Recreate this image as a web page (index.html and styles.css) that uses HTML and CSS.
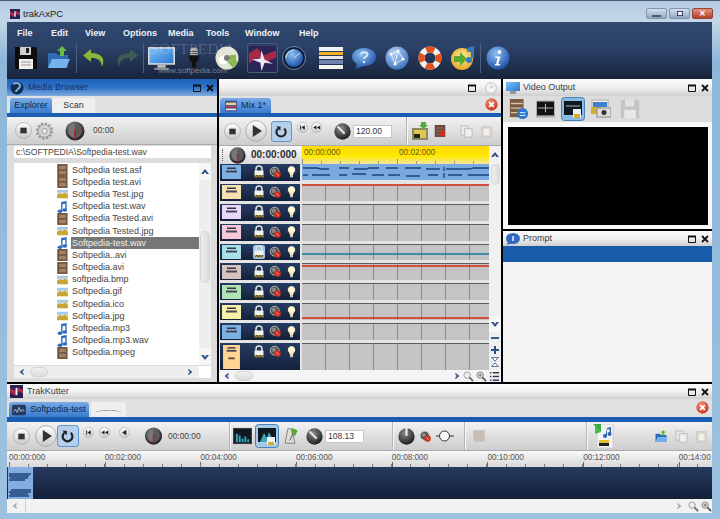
FILE: index.html
```html
<!DOCTYPE html>
<html lang="en">
<head>
<meta charset="utf-8">
<title>trakAxPC</title>
<link rel="stylesheet" href="styles.css">
</head>
<body>
<svg class="defs" aria-hidden="true">
  <defs>
    <linearGradient id="gBtn" x1="0" y1="0" x2="0" y2="1"><stop offset="0" stop-color="#ffffff"/><stop offset="1" stop-color="#c8c8c8"/></linearGradient>
    <linearGradient id="gScreen" x1="0" y1="0" x2="1" y2="1"><stop offset="0" stop-color="#7cc0f4"/><stop offset="1" stop-color="#2c78d4"/></linearGradient>
    <radialGradient id="gBlue" cx=".4" cy=".3" r=".8"><stop offset="0" stop-color="#8cc0f0"/><stop offset="1" stop-color="#1244a0"/></radialGradient>
    <radialGradient id="gBall" cx=".4" cy=".3" r=".8"><stop offset="0" stop-color="#b8d4f4"/><stop offset="1" stop-color="#3068b8"/></radialGradient>
    <radialGradient id="gDark" cx=".4" cy=".3" r=".8"><stop offset="0" stop-color="#8a8a8a"/><stop offset="1" stop-color="#111111"/></radialGradient>
    <radialGradient id="gRed" cx=".4" cy=".3" r=".8"><stop offset="0" stop-color="#f09070"/><stop offset="1" stop-color="#c82818"/></radialGradient>
    <radialGradient id="gGold" cx=".5" cy=".4" r=".7"><stop offset="0" stop-color="#fff0a0"/><stop offset="1" stop-color="#e09a10"/></radialGradient>
    <radialGradient id="gBulb" cx=".5" cy=".35" r=".7"><stop offset="0" stop-color="#ffffff"/><stop offset="1" stop-color="#f4e090"/></radialGradient>
  </defs>
  <symbol id="save" viewBox="0 0 24 24"><path d="M1 1h20l2 2v20H1z" fill="#0c0c0c"/><rect x="6" y="1" width="11" height="8" fill="#cfcfcf"/><rect x="12" y="2" width="3" height="5" fill="#222"/><rect x="5" y="13" width="14" height="10" fill="#f0f0f0"/><path d="M7 16h10M7 19h10" stroke="#999"/></symbol>
  <symbol id="save-off" viewBox="0 0 24 24"><path d="M1 1h20l2 2v20H1z" fill="#c4c4c4"/><rect x="6" y="1" width="11" height="8" fill="#e2e2e2"/><rect x="5" y="13" width="14" height="10" fill="#e8e8e8"/></symbol>
  <symbol id="open" viewBox="0 0 24 24"><path d="M1 7h8l2 2h10v13H1z" fill="#2f6cb5"/><path d="M1 22l4-9h18l-4 9z" fill="#74b2ee"/><path d="M15 0l5 5h-3v5h-4V5h-3z" fill="#66bc3e"/></symbol>
  <symbol id="undo" viewBox="0 0 24 24"><path d="M9 3L1 9.500l8 6.500v-4c6 0 10 1 11 9 4-9-1-14-11-14z" fill="#86b63c"/></symbol>
  <symbol id="redo" viewBox="0 0 24 24"><path d="M15 3l8 6.500-8 6.500v-4c-6 0-10 1-11 9-4-9 1-14 11-14z" fill="#3d5c55"/></symbol>
  <symbol id="monitor" viewBox="0 0 26 24"><rect x="0" y="1" width="26" height="17" fill="#d8d8d8"/><rect x="1.500" y="2.500" width="23" height="14" fill="url(#gScreen)"/><rect x="9" y="18" width="8" height="3" fill="#bbb"/><rect x="6" y="21" width="14" height="2" fill="#888"/></symbol>
  <symbol id="mic" viewBox="0 0 14 24"><rect x="3" y="1" width="8" height="12" rx="4" fill="#aaa"/><path d="M3 5h8M3 7h8M3 9h8" stroke="#555"/><path d="M2 9c0 10 10 10 10 0" fill="#111" stroke="#222"/><rect x="5" y="16" width="4" height="6" fill="#111"/><rect x="2" y="21" width="10" height="2" fill="#333"/></symbol>
  <symbol id="cd" viewBox="0 0 24 24"><circle cx="12" cy="12" r="11.500" fill="#e4e4d4"/><circle cx="8" cy="14" r="4.500" fill="#fff"/><circle cx="12" cy="12" r="3" fill="#777"/><path d="M15 9h6v6h3l-6 7-6-7h3z" fill="#88b84c"/></symbol>
  <symbol id="art" viewBox="0 0 26 24"><rect width="26" height="24" fill="#2c2458"/><path d="M0 7l8-5 6 7 12-5v7l-12 6-6-6-8 6z" fill="#a82848"/><path d="M12 4l3 9 8 4-8-1-3 8-1-8-8-3 8-1z" fill="#e8e8f0"/></symbol>
  <symbol id="globe" viewBox="0 0 24 24"><circle cx="12" cy="12" r="11.500" fill="#0d1c30" stroke="#6a8aa8"/><circle cx="12" cy="12" r="9" fill="url(#gBlue)"/><path d="M4 12a8 8 0 0 1 8-8M12 12l6-5" stroke="#cfe4f8" fill="none"/></symbol>
  <symbol id="list" viewBox="0 0 24 24"><rect x="0" y="1" width="24" height="4" fill="#f4f4f4"/><rect x="0" y="6" width="24" height="3" fill="#f0b020"/><rect x="0" y="10" width="24" height="3" fill="#e8e8e8"/><rect x="0" y="14" width="24" height="4" fill="#7080b0"/><rect x="0" y="19" width="24" height="4" fill="#f4f4f4"/></symbol>
  <symbol id="help" viewBox="0 0 24 24"><path d="M12 2c7 0 12 3.500 12 9s-5 9-12 9l-9 3 2-5c-3-2-5-4-5-7 0-5.500 5-9 12-9z" fill="url(#gBlue)"/><path d="M9 8.500c.5-3 6.500-3 6.500 0 0 2.500-3.500 2-3.500 4.500" fill="none" stroke="#dbe8fa" stroke-width="2"/><circle cx="12" cy="16" r="1.300" fill="#dbe8fa"/></symbol>
  <symbol id="net" viewBox="0 0 24 24"><circle cx="12" cy="12" r="11.500" fill="url(#gBall)"/><path d="M6 8l7-3 5 8-8 5zM13 5l-3 13" stroke="#e4f0fc" fill="none"/><circle cx="6" cy="8" r="1.500" fill="#fff"/><circle cx="13" cy="5" r="1.500" fill="#fff"/><circle cx="18" cy="13" r="1.500" fill="#fff"/><circle cx="10" cy="18" r="1.500" fill="#fff"/></symbol>
  <symbol id="ring" viewBox="0 0 24 24"><circle cx="12" cy="12" r="8.500" fill="none" stroke="#f0f0f0" stroke-width="6"/><circle cx="12" cy="12" r="8.500" fill="none" stroke="#e2501c" stroke-width="6" stroke-dasharray="8 5.350" stroke-dashoffset="4"/></symbol>
  <symbol id="gold" viewBox="0 0 24 24"><circle cx="11" cy="13" r="11" fill="url(#gGold)"/><path d="M3 11h6V7l7 7-7 7v-4H3z" fill="#5ca82c" transform="translate(0 -1)"/><path d="M16 2l7-2v12h-3V5l-4 1z" fill="#3878c0"/><circle cx="18" cy="14" r="3" fill="#3878c0"/></symbol>
  <symbol id="info" viewBox="0 0 24 24"><circle cx="12" cy="12" r="11.500" fill="url(#gBlue)"/><circle cx="13.500" cy="6" r="1.900" fill="#fff"/><path d="M9.500 10.500h5L12.300 18h2l-.4 1.500H8.700l.4-1.500h1l1.600-6H9z" fill="#fff"/></symbol>
  <symbol id="stop" viewBox="0 0 24 24"><circle cx="12" cy="12" r="11.300" fill="url(#gBtn)" stroke="#aaa"/><rect x="7.500" y="8" width="9" height="8" fill="#333"/></symbol>
  <symbol id="play" viewBox="0 0 24 24"><circle cx="12" cy="12" r="11.300" fill="url(#gBtn)" stroke="#aaa"/><path d="M8.500 5.500v13l10-6.500z" fill="#333"/></symbol>
  <symbol id="loop" viewBox="0 0 24 24"><rect x=".5" y=".5" width="23" height="23" rx="3" fill="#b4d0ec" stroke="#5088c0"/><path d="M8 8.500a5.300 5.300 0 1 0 7 0" fill="none" stroke="#222" stroke-width="2.400"/><path d="M6 6l5 .5-.5 5z" fill="#222"/></symbol>
  <symbol id="prev" viewBox="0 0 12 12"><circle cx="6" cy="6" r="5.600" fill="url(#gBtn)" stroke="#bbb"/><path d="M3.500 3.500h1v5h-1zM8.500 3.500v5L5 6z" fill="#222"/></symbol>
  <symbol id="rew" viewBox="0 0 12 12"><circle cx="6" cy="6" r="5.600" fill="url(#gBtn)" stroke="#bbb"/><path d="M6 3.800v4.400L2.500 6zM10 3.800v4.400L6.500 6z" fill="#222"/></symbol>
  <symbol id="back" viewBox="0 0 12 12"><circle cx="6" cy="6" r="5.600" fill="url(#gBtn)" stroke="#bbb"/><path d="M8 3v6L3.500 6z" fill="#222"/></symbol>
  <symbol id="gauge" viewBox="0 0 24 24"><circle cx="12" cy="12" r="11.500" fill="url(#gDark)"/><circle cx="12" cy="12" r="8" fill="#777"/><path d="M12 4a8 8 0 0 1 0 16" fill="#5a5a5a"/><rect x="11" y="10" width="2" height="12" fill="#b02020"/></symbol>
  <symbol id="tempo" viewBox="0 0 24 24"><circle cx="12" cy="12" r="11.500" fill="url(#gDark)"/><path d="M5 5l10 10" stroke="#e0e0e0" stroke-width="3"/></symbol>
  <symbol id="power" viewBox="0 0 24 24"><circle cx="12" cy="12" r="11.500" fill="url(#gDark)"/><rect x="10.500" y="0" width="3" height="11" fill="#eee"/></symbol>
  <symbol id="gear" viewBox="0 0 24 24"><circle cx="12" cy="12" r="8.500" fill="#d4d4d4" stroke="#888"/><circle cx="12" cy="12" r="10" fill="none" stroke="#999" stroke-width="3" stroke-dasharray="3 2.240"/><circle cx="12" cy="12" r="3.500" fill="#eee" stroke="#888"/></symbol>
  <symbol id="lock" viewBox="0 0 16 18"><path d="M4 8V5a4 4 0 0 1 8 0v3" fill="none" stroke="#e0e0e0" stroke-width="2"/><rect x="2" y="7" width="12" height="6" fill="#f0f0f0"/><rect x="2" y="13" width="12" height="3" fill="#d0b030"/><path d="M3 16l2-3 2 3 2-3 2 3 2-3" stroke="#222" fill="none"/></symbol>
  <symbol id="mute" viewBox="0 0 16 16"><circle cx="7" cy="7" r="5.500" fill="#555" stroke="#ccc"/><circle cx="6" cy="6" r="2.500" fill="#888"/><circle cx="10.500" cy="10.500" r="4" fill="#d03020"/><path d="M9 9l3 3" stroke="#f4c0b0"/></symbol>
  <symbol id="bulb" viewBox="0 0 12 18"><path d="M6 1a5 5 0 0 1 3 9l-1 3H4l-1-3a5 5 0 0 1 3-9z" fill="url(#gBulb)"/><rect x="4" y="13" width="4" height="3" fill="#c8c8c8"/></symbol>
  <symbol id="thumb" viewBox="0 0 19 14"><rect width="19" height="14"/><rect x="5" y="2.500" width="9" height="1.500" fill="#334"/><rect x="4" y="5.500" width="11" height="2" fill="#445"/></symbol>
  <symbol id="thumb-tall" viewBox="0 0 19 27"><rect width="19" height="27"/><rect x="5" y="2.500" width="9" height="1.500" fill="#334"/><rect x="4" y="5.500" width="11" height="2" fill="#445"/><rect x="6" y="14" width="7" height="2" fill="#543"/></symbol>
  <symbol id="close" viewBox="0 0 14 14"><circle cx="7" cy="7" r="6.600" fill="url(#gRed)"/><path d="M4.500 4.500l5 5M9.500 4.500l-5 5" stroke="#fff" stroke-width="2"/></symbol>
  <symbol id="max" viewBox="0 0 8 8"><path d="M.5 1.500h7v6h-7z" fill="none" stroke="#111"/><path d="M0 1.500h8" stroke="#111" stroke-width="2"/></symbol>
  <symbol id="x" viewBox="0 0 8 8"><path d="M1 1l6 6M7 1L1 7" stroke="#111" stroke-width="1.800"/></symbol>
  <symbol id="clock" viewBox="0 0 14 14"><circle cx="7" cy="7" r="6.300" fill="#f4f4f4" stroke="#bbb"/><path d="M7 3v4l3-2" fill="none" stroke="#bbb"/></symbol>
  <symbol id="up" viewBox="0 0 10 10"><path d="M5 2l4 5H6.500L5 5 3.500 7H1z" fill="#2c5080"/></symbol>
  <symbol id="down" viewBox="0 0 10 10"><path d="M5 8L1 3h2.500L5 5l1.500-2H9z" fill="#2c5080"/></symbol>
  <symbol id="left" viewBox="0 0 10 10"><path d="M2 5l5-4v2.500L5 5l2 1.500V9z" fill="#2c5080"/></symbol>
  <symbol id="right" viewBox="0 0 10 10"><path d="M8 5L3 1v2.500L5 5 3 6.500V9z" fill="#2c5080"/></symbol>
  <symbol id="minus" viewBox="0 0 10 10"><rect x="1" y="4" width="8" height="2" fill="#3a5a88"/></symbol>
  <symbol id="plus" viewBox="0 0 10 10"><path d="M4 1h2v3h3v2H6v3H4V6H1V4h3z" fill="#2c5080"/></symbol>
  <symbol id="tris" viewBox="0 0 10 12"><path d="M1 .5h8L5 5zM5 7l4 4.500H1z" fill="#fff" stroke="#2c5080"/></symbol>
  <symbol id="lines" viewBox="0 0 12 12"><path d="M1 2h1.500M4 2h7M1 6h1.500M4 6h7M1 10h1.500M4 10h7" stroke="#2c3e5c" stroke-width="1.600"/></symbol>
  <symbol id="zoom-out" viewBox="0 0 12 12"><circle cx="4.500" cy="4.500" r="3.500" fill="#eee" stroke="#999"/><path d="M7 7l4 4" stroke="#666" stroke-width="1.800"/></symbol>
  <symbol id="zoom-in" viewBox="0 0 12 12"><circle cx="4.500" cy="4.500" r="3.500" fill="#d8d8d8" stroke="#888"/><path d="M7 7l4 4" stroke="#555" stroke-width="1.800"/><path d="M4.500 3v3M3 4.500h3" stroke="#666"/></symbol>
  <symbol id="film" viewBox="0 0 11 13"><rect width="11" height="13" fill="#7a5a40"/><rect x="2" y="2" width="7" height="3.500" fill="#a08468"/><rect x="2" y="7.500" width="7" height="3.500" fill="#a08468"/><path d="M.5 1v11" stroke="#3a2a20" stroke-dasharray="1 1"/></symbol>
  <symbol id="image" viewBox="0 0 12 12"><rect y="1.500" width="12" height="9" fill="#e8e8f0"/><path d="M0 7l3-2 3 1 3-2 3 3v3.500H0z" fill="#c8a830"/><rect y="1.500" width="12" height="3" fill="#a8c8e8"/></symbol>
  <symbol id="note" viewBox="0 0 11 13"><path d="M4 1l6-1v9.500h-1.500V3L5.500 3.500v8H4z" fill="#2c6cc0"/><ellipse cx="2.800" cy="11" rx="2.600" ry="1.900" fill="#2c6cc0"/><ellipse cx="8" cy="9.800" rx="2.600" ry="1.900" fill="#2c6cc0"/></symbol>
  <symbol id="mixtab" viewBox="0 0 14 12"><rect width="14" height="12" rx="1" fill="#404880"/><rect x="1" y="2" width="12" height="3" fill="#e8d0a0"/><rect x="1" y="6" width="12" height="2" fill="#b04050"/><rect x="1" y="9" width="12" height="2" fill="#e8e8f4"/></symbol>
  <symbol id="cuttab" viewBox="0 0 16 12"><rect width="16" height="12" rx="2" fill="#2a3a5c"/><path d="M2 8l2-3 2 4 2-6 2 5 2-3 2 3" fill="none" stroke="#a0c0e0"/></symbol>
  <symbol id="kutter" viewBox="0 0 14 14"><rect width="14" height="14" fill="#2a2050"/><path d="M0 3l5 3 4-3 5 2v4L9 7 5 11 0 8z" fill="#b02848"/><path d="M6 3h2v8H6z" fill="#e8e8f4"/></symbol>
  <symbol id="mediatitle" viewBox="0 0 14 14"><circle cx="7" cy="7" r="6.500" fill="#0f3050"/><path d="M3 3c3-2 7-1 7 2s-4 3-4 6" fill="none" stroke="#80b0d8" stroke-width="2"/></symbol>
  <symbol id="mon-small" viewBox="0 0 14 12"><rect width="14" height="9" fill="url(#gScreen)"/><rect x="4" y="9" width="6" height="3" fill="#999"/></symbol>
  <symbol id="bubble-small" viewBox="0 0 14 12"><ellipse cx="7" cy="5.500" rx="7" ry="5.500" fill="#3468c0"/><path d="M2 8l-1 4 5-2z" fill="#3468c0"/><path d="M6 3h2v5H6z" fill="#bcd4f4"/></symbol>
  <symbol id="shelf" viewBox="0 0 20 22"><rect width="15" height="20" fill="#7a5a40"/><path d="M1 5h13M1 10h13M1 15h13" stroke="#d8c0a0" stroke-width="1.500"/><circle cx="14" cy="16" r="6" fill="#2c78d0"/><path d="M11 15h6M11 18h6" stroke="#fff"/></symbol>
  <symbol id="scope" viewBox="0 0 18 16"><rect width="18" height="16" fill="#aaa"/><rect x="1" y="1" width="16" height="13" fill="#111"/><path d="M2 7h14M9 3v8" stroke="#a0b8c8"/></symbol>
  <symbol id="photos" viewBox="0 0 20 18"><rect x="1" y="0" width="16" height="11" fill="#f0f0f0" stroke="#aaa"/><rect x="2" y="2" width="14" height="5" fill="#4080d0"/><rect x="0" y="7" width="10" height="7" fill="#d0b030"/><rect x="6" y="8" width="14" height="9" fill="#ddd" stroke="#888"/><circle cx="13" cy="12.500" r="2.500" fill="#333"/></symbol>
  <symbol id="add" viewBox="0 0 16 18"><rect y="6" width="16" height="12" fill="#8a8a60"/><rect x="2" y="8" width="12" height="8" fill="#e0c850"/><rect x="2" y="12" width="6" height="4" fill="#222"/><path d="M9 0h5v3h2l-4.500 4L7 3h2z" fill="#4cab3c"/></symbol>
  <symbol id="film-red" viewBox="0 0 14 16"><rect width="14" height="16" fill="#6a4a3a"/><path d="M2 4h10M2 8h10M2 12h10" stroke="#a08070"/><circle cx="10" cy="11" r="4" fill="#c83020"/></symbol>
  <symbol id="doc-off" viewBox="0 0 14 14"><rect x="1" y="1" width="8" height="10" fill="#e8e8e8" stroke="#bbb"/><rect x="5" y="4" width="8" height="9" fill="#f0f0f0" stroke="#bbb"/></symbol>
  <symbol id="clip-off" viewBox="0 0 12 14"><rect x="1" y="2" width="10" height="11" fill="#e0d8c8" stroke="#c4c4c4"/><rect x="3" y="4" width="6" height="7" fill="#f0f0f0"/></symbol>
  <symbol id="square-off" viewBox="0 0 12 12"><rect width="12" height="12" fill="#cdbcb0" stroke="#d8d0c8"/></symbol>
  <symbol id="spectrum" viewBox="0 0 20 17"><rect width="20" height="17" fill="#444"/><rect x="1" y="1" width="18" height="15" fill="#101820"/><path d="M3 15v-9h2v9zM6 15v-7h2v7zM9 15v-4h2v4zM12 15v-6h2v6zM15 15v-3h2v3z" fill="#38a8b8"/></symbol>
  <symbol id="spectrum-on" viewBox="0 0 24 24"><rect x=".5" y=".5" width="23" height="23" rx="3" fill="#a8c8e8" stroke="#4880b8"/><rect x="3" y="4" width="18" height="14" fill="#101820"/><path d="M5 18l4-9 3 5 2-6 5 10z" fill="#38a8b8"/><rect x="12" y="13" width="8" height="8" fill="#f0f0f0"/><rect x="13" y="18" width="6" height="3" fill="#d0b030"/></symbol>
  <symbol id="tv-on" viewBox="0 0 24 24"><rect x=".5" y=".5" width="23" height="23" rx="3" fill="#8cb8e4" stroke="#4880b8"/><rect x="3" y="4" width="18" height="14" fill="#101820"/><path d="M5 9h14" stroke="#a0b8c8"/><rect x="12" y="12" width="8" height="9" fill="#f0f0f0"/><rect x="13" y="17" width="6" height="4" fill="#d0b030"/></symbol>
  <symbol id="metro" viewBox="0 0 18 20"><path d="M6 2h4l4 16H3z" fill="#e0e0d8" stroke="#777"/><path d="M8 15L14 3" stroke="#444"/><path d="M11 1l6 3-3 6-4-3z" fill="#58a838"/></symbol>
  <symbol id="circle-line" viewBox="0 0 18 12"><path d="M0 6h3M14 6h4" stroke="#333"/><circle cx="8.500" cy="6" r="5" fill="#f8f8f8" stroke="#333"/></symbol>
  <symbol id="music-doc" viewBox="0 0 22 24"><rect x="4" y="0" width="16" height="24" fill="#f4f4f4" stroke="#ccc"/><path d="M14 4l4-1v7h-1.500V5l-2.500.600v6h-1.500z" fill="#2c60b0"/><circle cx="12" cy="12" r="2" fill="#2c60b0"/><circle cx="16.500" cy="10" r="2" fill="#2c60b0"/><rect x="6" y="16" width="10" height="6" fill="#e0c030"/><rect x="6" y="19" width="10" height="3" fill="#222"/><path d="M0 0h8v8z" fill="#3ca83c"/><path d="M1 7l8-6 2 6z" fill="#48bc48" transform="rotate(90 5 4)"/></symbol>
</svg>

<div class="window">
  <header class="titlebar">
    <svg class="ic10 app-ic"><use href="#kutter"/></svg>
    <span class="title">trakAxPC</span>
    <div class="winbtns">
      <span class="winbtn"><i class="glyph-min"></i></span>
      <span class="winbtn"><i class="glyph-max"></i></span>
      <span class="winbtn winclose">✕</span>
    </div>
  </header>

  <div class="app">
    <div class="appbar">
      <nav class="menu">
        <span>File</span><span>Edit</span><span>View</span><span>Options</span><span>Media</span><span>Tools</span><span>Window</span><span>Help</span>
      </nav>
      <div class="toolbar">
        <span class="tool"><svg class="ic24"><use href="#save"/></svg></span>
        <span class="tool"><svg class="ic24"><use href="#open"/></svg></span>
        <i class="tsep"></i>
        <span class="tool"><svg class="ic24"><use href="#undo"/></svg></span>
        <span class="tool"><svg class="ic24"><use href="#redo"/></svg></span>
        <i class="tsep"></i>
        <span class="tool"><svg class="ic24w"><use href="#monitor"/></svg></span>
        <span class="tool"><svg class="ic24n"><use href="#mic"/></svg></span>
        <span class="tool"><svg class="ic24"><use href="#cd"/></svg></span>
        <span class="tool tool-framed"><svg class="ic24w"><use href="#art"/></svg></span>
        <span class="tool"><svg class="ic24"><use href="#globe"/></svg></span>
        <span class="tool tool-wide"><svg class="ic24"><use href="#list"/></svg></span>
        <span class="tool"><svg class="ic24"><use href="#help"/></svg></span>
        <span class="tool"><svg class="ic24"><use href="#net"/></svg></span>
        <span class="tool"><svg class="ic24"><use href="#ring"/></svg></span>
        <span class="tool"><svg class="ic24"><use href="#gold"/></svg></span>
        <i class="tsep"></i>
        <span class="tool"><svg class="ic24"><use href="#info"/></svg></span>
      </div>
      <div class="watermark"><b>SOFTPEDIA</b><small>www.softpedia.com</small></div>
    </div>

    <div class="work">
      <div class="upper">

        <section class="pane pane-left">
          <div class="phead phead-active">
            <svg class="ic14"><use href="#mediatitle"/></svg>
            <span class="ptitle">Media Browser</span>
            <svg class="ic8"><use href="#max"/></svg>
            <svg class="ic8"><use href="#x"/></svg>
          </div>
          <div class="tabs">
            <span class="tab tab-on">Explorer</span>
            <span class="tab tab-off">Scan</span>
          </div>
          <div class="stripe"></div>
          <div class="ctl ctl-left">
            <span class="cell w16"><svg class="ic17"><use href="#stop"/></svg></span>
            <span class="cell w26"><svg class="ic18"><use href="#gear"/></svg></span>
            <span class="cell w36"><svg class="ic20"><use href="#gauge"/></svg></span>
            <span class="time">00:00</span>
          </div>
          <div class="path">c:\SOFTPEDIA\Softpedia-test.wav</div>
          <div class="browser">
            <ul class="files">
              <li><svg class="fic"><use href="#film"/></svg><span>Softpedia test.asf</span></li>
              <li><svg class="fic"><use href="#film"/></svg><span>Softpedia test.avi</span></li>
              <li><svg class="fic"><use href="#image"/></svg><span>Softpedia Test.jpg</span></li>
              <li><svg class="fic"><use href="#note"/></svg><span>Softpedia test.wav</span></li>
              <li><svg class="fic"><use href="#film"/></svg><span>Softpedia Tested.avi</span></li>
              <li><svg class="fic"><use href="#image"/></svg><span>Softpedia Tested.jpg</span></li>
              <li class="sel"><svg class="fic"><use href="#note"/></svg><span>Softpedia-test.wav</span></li>
              <li><svg class="fic"><use href="#film"/></svg><span>Softpedia..avi</span></li>
              <li><svg class="fic"><use href="#film"/></svg><span>Softpedia.avi</span></li>
              <li><svg class="fic"><use href="#image"/></svg><span>softpedia.bmp</span></li>
              <li><svg class="fic"><use href="#image"/></svg><span>Softpedia.gif</span></li>
              <li><svg class="fic"><use href="#image"/></svg><span>Softpedia.ico</span></li>
              <li><svg class="fic"><use href="#image"/></svg><span>Softpedia.jpg</span></li>
              <li><svg class="fic"><use href="#note"/></svg><span>Softpedia.mp3</span></li>
              <li><svg class="fic"><use href="#note"/></svg><span>Softpedia.mp3.wav</span></li>
              <li><svg class="fic"><use href="#film"/></svg><span>Softpedia.mpeg</span></li>
            </ul>
            <div class="vscroll vs-files">
              <span class="sbtn sbtn-up"><svg class="ic10"><use href="#up"/></svg></span>
              <span class="vthumb vthumb-files"></span>
              <span class="sbtn sbtn-down"><svg class="ic10"><use href="#down"/></svg></span>
            </div>
            <div class="hscroll hs-files">
              <svg class="ic8"><use href="#left"/></svg>
              <span class="hthumb"></span>
              <svg class="ic8 push"><use href="#right"/></svg>
            </div>
            <div class="corner"></div>
          </div>
        </section>

        <section class="pane pane-mid">
          <div class="phead">
            <span class="ptitle"></span>
            <svg class="ic8"><use href="#max"/></svg>
            <svg class="ic12 clock"><use href="#clock"/></svg>
          </div>
          <div class="tabs tabs-mid">
            <span class="tab tab-on tab-icon"><svg class="ic12"><use href="#mixtab"/></svg>Mix 1*</span>
            <svg class="ic13 tabclose"><use href="#close"/></svg>
          </div>
          <div class="stripe"></div>
          <div class="ctl ctl-mid">
            <span class="cell w26"><svg class="ic17"><use href="#stop"/></svg></span>
            <span class="cell w22"><svg class="ic22"><use href="#play"/></svg></span>
            <span class="cell w28"><svg class="ic21"><use href="#loop"/></svg></span>
            <span class="cell w14 raise"><svg class="ic11"><use href="#prev"/></svg></span>
            <span class="cell w14 raise"><svg class="ic11"><use href="#rew"/></svg></span>
            <span class="cell w8"></span>
            <span class="cell w22"><svg class="ic17"><use href="#tempo"/></svg></span>
            <span class="numbox">120.00</span>
            <span class="cell w13"></span>
            <i class="csep"></i>
            <span class="cell w22"><svg class="ic16t"><use href="#add"/></svg></span>
            <span class="cell w18"><svg class="ic12"><use href="#film-red"/></svg></span>
            <span class="cell w6"></span>
            <span class="cell w22"><svg class="ic13"><use href="#doc-off"/></svg></span>
            <span class="cell w18"><svg class="ic13"><use href="#clip-off"/></svg></span>
          </div>
          <div class="mixer">
            <div class="rhead">
              <span class="rmark"></span>
              <svg class="ic17"><use href="#gauge"/></svg>
              <span class="rtime">00:00:000</span>
            </div>
            <div class="yruler">
              <span>00:00:000</span><span>00:02:000</span>
            </div>
            <div class="corner-up"><svg class="ic10"><use href="#up"/></svg></div>

            <div class="tracks">
              <div class="trk"><svg class="thumb t1"><use href="#thumb"/></svg><svg class="lock"><use href="#lock"/></svg><svg class="mute"><use href="#mute"/></svg><svg class="bulb"><use href="#bulb"/></svg></div>
              <div class="trk"><svg class="thumb t2"><use href="#thumb"/></svg><svg class="lock"><use href="#lock"/></svg><svg class="mute"><use href="#mute"/></svg><svg class="bulb"><use href="#bulb"/></svg></div>
              <div class="trk"><svg class="thumb t3"><use href="#thumb"/></svg><svg class="lock"><use href="#lock"/></svg><svg class="mute"><use href="#mute"/></svg><svg class="bulb"><use href="#bulb"/></svg></div>
              <div class="trk"><svg class="thumb t4"><use href="#thumb"/></svg><svg class="lock"><use href="#lock"/></svg><svg class="mute"><use href="#mute"/></svg><svg class="bulb"><use href="#bulb"/></svg></div>
              <div class="trk"><svg class="thumb t5"><use href="#thumb"/></svg><svg class="lock lock-on"><use href="#lock"/></svg><svg class="mute"><use href="#mute"/></svg><svg class="bulb"><use href="#bulb"/></svg></div>
              <div class="trk"><svg class="thumb t6"><use href="#thumb"/></svg><svg class="lock"><use href="#lock"/></svg><svg class="mute"><use href="#mute"/></svg><svg class="bulb"><use href="#bulb"/></svg></div>
              <div class="trk"><svg class="thumb t7"><use href="#thumb"/></svg><svg class="lock"><use href="#lock"/></svg><svg class="mute"><use href="#mute"/></svg><svg class="bulb"><use href="#bulb"/></svg></div>
              <div class="trk"><svg class="thumb t8"><use href="#thumb"/></svg><svg class="lock"><use href="#lock"/></svg><svg class="mute"><use href="#mute"/></svg><svg class="bulb"><use href="#bulb"/></svg></div>
              <div class="trk"><svg class="thumb t9"><use href="#thumb"/></svg><svg class="lock"><use href="#lock"/></svg><svg class="mute"><use href="#mute"/></svg><svg class="bulb"><use href="#bulb"/></svg></div>
              <div class="trk trk-tall"><svg class="thumb thumb-tall t10"><use href="#thumb-tall"/></svg><svg class="lock"><use href="#lock"/></svg><svg class="mute"><use href="#mute"/></svg><svg class="bulb"><use href="#bulb"/></svg></div>
            </div>

            <div class="lanes">
              <div class="lane lane-clip">
                <svg class="wave" viewBox="0 0 187 16" preserveAspectRatio="none"><path d="M1 4h14l4 1h8M37 4h10M52 5h12l3-1h10M84 4h12M103 4h16M124 5h14M142 3v4M144 5h24l3-1h16M1 11h5M10 11h18M37 11h8M50 10h14M70 11h12M86 11h12M104 12h14M126 11h10M142 9v5M146 11h14M166 11h21" stroke="#1c4478" stroke-width="1.300" fill="none"/></svg>
              </div>
              <div class="lane lane-red-top"></div>
              <div class="lane"></div>
              <div class="lane"></div>
              <div class="lane"><i class="env env-teal"></i></div>
              <div class="lane"><i class="env env-red2"></i></div>
              <div class="lane"></div>
              <div class="lane"><i class="env env-red"></i></div>
              <div class="lane"></div>
              <div class="lane lane-tall"></div>
            </div>

            <div class="vscroll vs-mix">
              <span class="vthumb vthumb-mix"></span>
              <span class="sbtn sbtn-mid"><svg class="ic10"><use href="#down"/></svg></span>
              <svg class="ic10 mtop"><use href="#minus"/></svg>
              <svg class="ic10 mtop2"><use href="#plus"/></svg>
              <svg class="ic10 mtop2"><use href="#tris"/></svg>
            </div>
          </div>
          <div class="hscroll hs-mix">
            <svg class="ic8"><use href="#left"/></svg>
            <span class="hthumb"></span>
            <svg class="ic8 push"><use href="#right"/></svg>
            <svg class="ic11 zoomgap"><use href="#zoom-out"/></svg>
            <svg class="ic11 zoomgap2"><use href="#zoom-in"/></svg>
            <svg class="ic11 zoomgap2"><use href="#lines"/></svg>
          </div>
        </section>

        <div class="rightcol">
          <section class="pane pane-video">
            <div class="phead">
              <svg class="ic14"><use href="#mon-small"/></svg>
              <span class="ptitle">Video Output</span>
              <svg class="ic8"><use href="#max"/></svg>
              <svg class="ic8"><use href="#x"/></svg>
            </div>
            <div class="vtools">
              <span class="cell w27"><svg class="ic20"><use href="#shelf"/></svg></span>
              <span class="cell w27"><svg class="ic18"><use href="#scope"/></svg></span>
              <span class="cell w27"><svg class="ic24"><use href="#tv-on"/></svg></span>
              <span class="cell w30"><svg class="ic20"><use href="#photos"/></svg></span>
              <span class="cell w27"><svg class="ic20"><use href="#save-off"/></svg></span>
            </div>
            <div class="screenwrap"><div class="screen"></div></div>
          </section>
          <section class="pane pane-prompt">
            <div class="phead phead-prompt">
              <svg class="ic14"><use href="#bubble-small"/></svg>
              <span class="ptitle">Prompt</span>
              <svg class="ic8"><use href="#max"/></svg>
              <svg class="ic8"><use href="#x"/></svg>
            </div>
            <div class="promptbar"></div>
          </section>
        </div>
      </div>

      <section class="pane pane-lower">
        <div class="phead phead-lower">
          <svg class="ic13"><use href="#kutter"/></svg>
          <span class="ptitle">TrakKutter</span>
          <svg class="ic8"><use href="#max"/></svg>
          <svg class="ic8"><use href="#x"/></svg>
        </div>
        <div class="tabs tabs-lower">
          <span class="tab tab-on tab-cut"><svg class="ic14"><use href="#cuttab"/></svg>Softpedia-test</span>
          <span class="tab tab-off tab-dots">..------..</span>
          <svg class="ic13 tabclose"><use href="#close"/></svg>
        </div>
        <div class="stripe stripe-lower"></div>
        <div class="ctl ctl-lower">
          <span class="cell w28"><svg class="ic17"><use href="#stop"/></svg></span>
          <span class="cell w21"><svg class="ic22"><use href="#play"/></svg></span>
          <span class="cell w24"><svg class="ic22"><use href="#loop"/></svg></span>
          <span class="cell w16 raise"><svg class="ic11"><use href="#prev"/></svg></span>
          <span class="cell w16 raise"><svg class="ic11"><use href="#rew"/></svg></span>
          <span class="cell w24 raise"><svg class="ic11"><use href="#back"/></svg></span>
          <span class="cell w34"><svg class="ic18"><use href="#gauge"/></svg></span>
          <span class="time time-lower">00:00:00</span>
          <i class="csep"></i>
          <span class="cell w20"><svg class="ic18"><use href="#spectrum"/></svg></span>
          <span class="cell w30"><svg class="ic24"><use href="#spectrum-on"/></svg></span>
          <span class="cell w16"><svg class="ic18"><use href="#metro"/></svg></span>
          <span class="cell w6"></span>
          <span class="cell w21"><svg class="ic17"><use href="#tempo"/></svg></span>
          <span class="numbox">108.13</span>
          <span class="cell w27"></span>
          <i class="csep"></i>
          <span class="cell w23"><svg class="ic17"><use href="#power"/></svg></span>
          <span class="cell w15"><svg class="ic13"><use href="#mute"/></svg></span>
          <span class="cell w24"><svg class="ic18s"><use href="#circle-line"/></svg></span>
          <span class="cell w6"></span>
          <i class="csep"></i>
          <span class="cell w24"><svg class="ic12"><use href="#square-off"/></svg></span>
          <span class="cell w94"></span>
          <i class="csep"></i>
          <span class="cell w30"><svg class="ic24"><use href="#music-doc"/></svg></span>
          <span class="cell w32"></span>
          <span class="cell w20"><svg class="ic13"><use href="#open"/></svg></span>
          <span class="cell w20"><svg class="ic13"><use href="#doc-off"/></svg></span>
          <span class="cell w20"><svg class="ic13"><use href="#clip-off"/></svg></span>
        </div>
        <div class="gruler">
          <span>00:00:000</span><span>00:02:000</span><span>00:04:000</span><span>00:06:000</span><span>00:08:000</span><span>00:10:000</span><span>00:12:000</span><span class="gruler-end">00:14:00</span>
        </div>
        <div class="cutlane">
          <div class="cutclip">
            <svg class="wave" viewBox="0 0 25 32" preserveAspectRatio="none"><path d="M1 7h22M1 9h20M2 11h18M1 13h16M3 23h20M1 25h22M2 27h18M1 29h20" stroke="#1c4478" stroke-width="1.300" fill="none"/></svg>
          </div>
        </div>
        <div class="hscroll hs-lower">
          <svg class="ic8 dim"><use href="#left"/></svg>
          <span class="hthumb-lower"></span>
          <svg class="ic8 push dim"><use href="#right"/></svg>
          <svg class="ic11 zoomgap3"><use href="#zoom-out"/></svg>
          <svg class="ic11 zoomgap2"><use href="#zoom-in"/></svg>
        </div>
      </section>
    </div>
  </div>
</div>
</body>
</html>
```

FILE: styles.css
```css
* { box-sizing: border-box; }
html, body { margin: 0; padding: 0; background: #8fb4d4; }
body { font: 9px/1 "Liberation Sans", Arial, sans-serif; color: #333; }
i { font-style: normal; display: block; }
svg { display: block; flex: none; }
.defs { position: absolute; width: 0; height: 0; overflow: hidden; }

.window {
  width: 720px; height: 519px; overflow: hidden; display: flex; flex-direction: column;
  background: linear-gradient(#b6cce2 0, #c4d6e8 20px, #8eb6d8 60px, #9cc2e0 100%);
  border-top: 1px solid #4a5a6a;
}
.titlebar { height: 21px; flex: none; display: flex; align-items: center; padding: 4px 7px 0 10px; }
.app-ic { margin-right: 3px; }
.title { font-size: 9.500px; color: #222; }
.winbtns { margin-left: auto; display: flex; gap: 2px; align-self: flex-start; margin-top: 3px; }
.winbtn {
  width: 21px; height: 11px; border: 1px solid #7f95ae; border-radius: 2px;
  background: linear-gradient(#d4e0ee, #8ea6c2); display: flex; align-items: center; justify-content: center;
}
.winclose { background: linear-gradient(#e89080, #b83c28); border-color: #90483c; color: #fff; font-size: 8px; font-weight: bold; }
.glyph-min { width: 7px; margin-top: 4px; background: #eef; border: 1px solid #556; box-sizing: content-box; height: 0; }
.glyph-max { width: 6px; height: 5px; border: 1px solid #445; background: #eef; }

.app { width: 705px; height: 491px; margin-left: 7px; flex: none; display: flex; flex-direction: column; }
.appbar { height: 57px; flex: none; position: relative; background: linear-gradient(#31496f, #2a4066 45%, #18243c); }
.menu {
  height: 21px; padding: 1px 0 0 10px; display: grid; align-items: center;
  grid-template-columns: 34px 34px 38px 45px 38px 39px 54px auto;
  font-weight: bold; color: #eef2f8;
}
.toolbar { height: 36px; display: flex; align-items: flex-start; padding: 0 0 0 2.5px; }
.tool { width: 33px; height: 30px; display: flex; align-items: center; justify-content: center; flex: none; }
.tool-framed { width: 31px; margin: 0 0 0 3px; border: 1px solid #4a5a78; border-radius: 2px; }
.tool-wide { margin-left: 4px; }
.tsep { width: 1px; height: 30px; background: #4c5f7e; flex: none; margin-right: .5px; }
.watermark { position: absolute; left: 136px; top: 20px; width: 100px; text-align: center; color: rgba(255, 255, 255, .2); }
.watermark b { display: block; font: 15px/15px "Liberation Serif", serif; letter-spacing: .5px; }
.watermark small { display: block; font-size: 8px; line-height: 9px; margin-top: 9px; color: rgba(255, 255, 255, .4); }

.ic8 { width: 8px; height: 8px; }
.ic10 { width: 10px; height: 10px; }
.ic11 { width: 11px; height: 11px; }
.ic12 { width: 12px; height: 12px; }
.ic13 { width: 13px; height: 13px; }
.ic14 { width: 14px; height: 14px; }
.ic17 { width: 17px; height: 17px; }
.ic16t { width: 16px; height: 18px; }
.ic18 { width: 19px; height: 18px; }
.ic18s { width: 18px; height: 12px; }
.ic20 { width: 20px; height: 20px; }
.ic21 { width: 21px; height: 21px; }
.ic22 { width: 22px; height: 22px; }
.ic24 { width: 24px; height: 24px; }
.ic24w { width: 27px; height: 25px; }
.ic24n { width: 14px; height: 25px; }

.work { flex: 1; min-height: 0; background: #000; display: flex; flex-direction: column; gap: 2px; }
.upper { height: 303px; flex: none; display: flex; gap: 2px; }
.pane { background: #dcdcdc; display: flex; flex-direction: column; min-width: 0; }
.pane-left { width: 210px; flex: none; }
.pane-mid { width: 282px; flex: none; }
.rightcol { width: 209px; flex: none; display: flex; flex-direction: column; gap: 2px; }

.phead {
  height: 17px; flex: none; display: flex; align-items: center; gap: 5px; padding: 0 3px 0 3px;
  background: linear-gradient(#fbfbfb, #f2f2f2 45%, #d0d0d0);
}
.phead-active { background: linear-gradient(#1f60b8, #2e74cc 50%, #80aade); }
.ptitle { flex: 1; margin-left: -2px; color: #3c3c3c; }
.phead-active .ptitle { color: #16325c; }
.phead-active .ptitle, .phead-lower .ptitle { margin-left: -1px; }
.pane-mid .phead { padding-right: 4px; }
.clock { margin-left: 4px; }
.tabs { height: 17px; flex: none; display: flex; align-items: flex-end; padding-left: 3px; background: #e2e2e2; }
.tab { height: 15px; display: flex; align-items: center; justify-content: center; border-radius: 3px 3px 0 0; flex: none; }
.tab-on { width: 42px; background: linear-gradient(#78aae4, #3a7cd0); color: #10294c; }
.tab-off { width: 43px; background: #efefef; color: #333; }
.tabs-mid { padding-left: 1px; }
.tab-icon { width: 51px; gap: 4px; }
.tabclose { margin: 0 3px 1px auto; align-self: center; }
.stripe { height: 4px; flex: none; background: #1a5eb4; }

.ctl { height: 28px; flex: none; display: flex; align-items: center; background: linear-gradient(#f2f2f2, #cdcdcd); border-bottom: 1px solid #aaa; }
.ctl-left { padding-left: 8px; }
.ctl-mid { height: 29px; }
.cell { display: flex; align-items: center; justify-content: center; flex: none; height: 100%; }
.raise { padding-bottom: 7px; }
.w6 { width: 6px; } .w8 { width: 8px; } .w13 { width: 13px; } .w14 { width: 14px; } .w15 { width: 15px; } .w16 { width: 16px; }
.w18 { width: 18px; } .w20 { width: 20px; } .w21 { width: 21px; } .w22 { width: 22px; } .w23 { width: 23px; }
.w24 { width: 24px; } .w26 { width: 26px; } .w27 { width: 27px; } .w28 { width: 28px; } .w30 { width: 30px; }
.w32 { width: 32px; } .w34 { width: 34px; } .w36 { width: 36px; } .w94 { width: 94px; }
.time { color: #444; font-size: 8.400px; }
.numbox { width: 39px; height: 13px; background: #fff; border: 1px solid #c8c8c8; padding: 1.500px 0 0 2px; color: #333; flex: none; font-size: 8.500px; }
.csep { width: 2px; height: 100%; flex: none; margin: 0 1px; background: linear-gradient(90deg, #b4b4b4 50%, #fafafa 50%); }

.path { width: 197px; height: 12px; margin: 1px 0 0 7px; padding: 2px 0 0 2px; background: #fff; color: #444; flex: none; font-size: 8.600px; }
.browser { margin: 5px 0 0 7px; display: grid; grid-template-columns: 185px 12px; grid-template-rows: 202px 13px; }
.files { list-style: none; margin: 0; padding: 1px 0 0 43px; background: #fff; overflow: hidden; }
.files li { height: 12.2px; display: flex; align-items: center; }
.fic { width: 11px; height: 12px; }
.files span { flex: 1; height: 100%; display: flex; align-items: center; margin-left: 3px; padding-left: 1px; color: #444; white-space: nowrap; }
.files .sel span { background: #777; color: #f0f0f0; }

.vscroll { display: flex; flex-direction: column; align-items: center; background: #eeeeee; }
.sbtn { height: 17px; width: 100%; flex: none; display: flex; align-items: center; justify-content: center; background: #f6f6f6; }
.sbtn-down { margin-top: auto; }
.vthumb { width: 10px; border: 1px solid #d4d4d4; border-radius: 5px; background: linear-gradient(90deg, #eee, #dcdcdc); flex: none; }
.vthumb-files { height: 52px; margin-top: 51px; }
.hscroll { display: flex; align-items: center; background: #eeeeee; }
.hs-files { padding: 0 5px 0 4px; margin-top: 1px; }
.hthumb { width: 18px; height: 10px; margin-left: 4px; border: 1px solid #d4d4d4; border-radius: 5px; background: linear-gradient(#f0f0f0, #dcdcdc); }
.push { margin-left: auto; }
.corner { background: #fff; margin-top: 1px; }

.mixer { display: grid; grid-template-columns: 83px 187px 12px; grid-template-rows: 18px 206px; flex: none; height: 224px; background: #e6e6e6; }
.rhead { display: flex; align-items: center; background: linear-gradient(#fafafa, #d8d8d8); padding-left: 3px; }
.rmark { width: 7px; height: 12px; border-left: 1px dotted #666; flex: none; }
.rtime { font-weight: bold; font-size: 10px; color: #2c2c2c; margin-left: 5px; }
.yruler {
  display: flex; padding: 2px 0 0 2px; color: #6a5a10; font-size: 8.200px; line-height: 10px;
  background:
    repeating-linear-gradient(90deg, #998 0 1px, transparent 1px 19px) 0 100% / 100% 3px no-repeat,
    repeating-linear-gradient(90deg, #887 0 1px, transparent 1px 95px) 0 100% / 100% 5px no-repeat,
    linear-gradient(#ffd800, #ffe800 55%, #f2e6a0);
}
.yruler span { width: 95px; flex: none; }
.corner-up { display: flex; align-items: center; justify-content: center; background: #f2f2f2; }
.tracks { display: flex; flex-direction: column; padding: 0 2px 0 1px; background: #e4e4e4; }
.trk {
  height: 16.900px; margin-bottom: 3px; flex: none; display: flex; align-items: center; padding-left: 2px;
  background: linear-gradient(#263c62, #14203a);
}
.trk-tall { height: 27px; margin: 0; align-items: flex-start; padding-top: 2px; }
.thumb { width: 19px; height: 14px; }
.thumb-tall { height: 24px; }
.t1 { fill: #7fb0e2; } .t2 { fill: #f6e0b0; } .t3 { fill: #e6d8f6; } .t4 { fill: #f6c8d8; } .t5 { fill: #a8e0e8; }
.t6 { fill: #d4c4bc; } .t7 { fill: #b0e4b4; } .t8 { fill: #f8f0a4; } .t9 { fill: #7cb0e4; } .t10 { fill: #ffd494; }
.lock { width: 12px; height: 14px; margin-left: 12px; }
.lock-on { background: #9cc4ec; border-radius: 2px; }
.mute { width: 13px; height: 13px; margin-left: 4px; }
.bulb { width: 9px; height: 14px; margin-left: 5px; }

.lanes { display: flex; flex-direction: column; background: #e4e4e4; overflow: hidden; }
.lane {
  height: 16.900px; margin-bottom: 3px; flex: none; border-top: 1px solid #5c5c5c;
  background:
    repeating-linear-gradient(90deg, transparent 0 23px, #8a8a8a 23px 24px) 0 0,
    #c4c4c4;
}
.lane-tall { height: 27px; margin: 0; }
.lane-clip { border-top: 0; height: 16px; margin-bottom: 3.900px; background: #7aa8e0; }
.wave { width: 100%; height: 100%; }
.lane-red-top { border-top: 2px solid #d0503c; }
.env { height: 2px; }
.env-teal { background: #3f8ea8; margin-top: 8px; }
.env-red { background: #d0503c; margin-top: 13px; }
.env-red2 { background: #d0503c; margin-top: 1px; }
.vs-mix { background: #f0f0f0; }
.vthumb-mix { height: 21px; width: 9px; }
.sbtn-mid { height: 16px; margin-top: 131px; background: #f8f8f8; }
.mtop { margin-top: 1px; }
.mtop2 { margin-top: 2px; }
.hs-mix { height: 12px; padding: 0 1px 0 4px; flex: none; background: #f4f4f4; }
.zoomgap { margin: 0 0 0 2px; }
.zoomgap2 { margin-left: 2px; }

.pane-video { height: 150px; flex: none; background: #fff; }
.vtools { height: 26px; flex: none; display: flex; align-items: center; padding-left: 2px; background: #dcdcdc; }
.screenwrap { flex: 1; padding: 5px 4px 4px 5px; display: flex; background: #f8f8f8; }
.screen { flex: 1; background: #000; }
.pane-prompt { flex: 1; background: #f4f4f4; }
.phead-prompt { height: 15px; }
.promptbar { height: 16px; flex: none; background: #175cab; }

.pane-lower { flex: 1; min-height: 0; }
.phead-lower { height: 15px; }
.tabs-lower { height: 18px; background: #e0e0e0; padding-left: 2px; }
.tab-cut { width: 80px; gap: 4px; }
.tab-dots { width: 35px; margin-left: 2px; font-size: 8px; color: #555; }
.stripe-lower { height: 5px; }
.ctl-lower { height: 29px; }
.time-lower { width: 60px; margin-left: -2px; flex: none; }
.gruler {
  height: 16px; flex: none; display: flex; padding: 2px 0 0 2px; color: #555; font-size: 8.200px; line-height: 9px;
  background:
    repeating-linear-gradient(90deg, #777 0 1px, transparent 1px 19.100px) 2px 100% / 100% 3px no-repeat,
    repeating-linear-gradient(90deg, #666 0 1px, transparent 1px 95.700px) 2px 100% / 100% 5px no-repeat,
    linear-gradient(#f8f8f8, #d8d8d8);
}
.gruler span { width: 95.700px; flex: none; }
.gruler .gruler-end { width: auto; }
.cutlane { height: 32px; flex: none; background: linear-gradient(#263a5e, #14203a); padding-left: 1px; }
.cutclip { width: 25px; height: 32px; background: #84aee2; }
.hs-lower { height: 14px; flex: none; padding: 0 0 0 4px; background: #f2f2f2; }
.hthumb-lower { width: 1px; height: 100%; margin-left: 6px; background: #d0d0d0; }
.dim { opacity: .45; }
.zoomgap3 { margin-left: 5px; }
```
